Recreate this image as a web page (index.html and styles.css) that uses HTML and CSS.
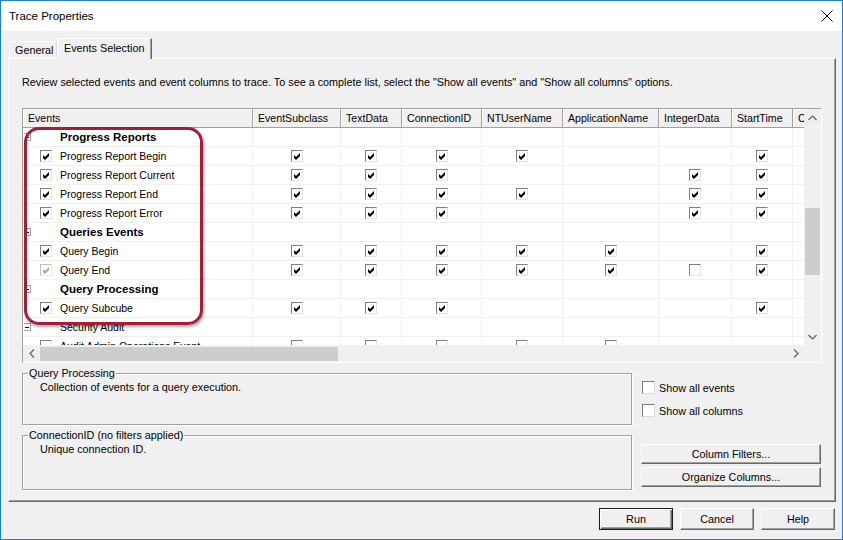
FILE: index.html
```html
<!DOCTYPE html>
<html>
<head>
<meta charset="utf-8">
<link rel="stylesheet" href="styles.css">
</head>
<body>
<div class="window">
  <div class="titlebar">
    <span class="title">Trace Properties</span>
    <svg class="close" width="12" height="12" viewBox="0 0 12 12"><path d="M0.5 0.5 L11.5 11.5 M11.5 0.5 L0.5 11.5" stroke="#000" stroke-width="1" fill="none"/></svg>
  </div>
  <div class="tabs">
    <div class="tab">General</div>
    <div class="tab active">Events Selection</div>
  </div>
  <div class="panel">
    <div class="intro">Review selected events and event columns to trace. To see a complete list, select the "Show all events" and "Show all columns" options.</div>
    <div class="gridwrap">
      <div class="gmain">
        <div class="viewport">
          <div class="row head">
            <div class="h">Events</div><div class="h">EventSubclass</div><div class="h">TextData</div><div class="h">ConnectionID</div><div class="h">NTUserName</div><div class="h">ApplicationName</div><div class="h">IntegerData</div><div class="h">StartTime</div><div class="h">CPUTime</div>
          </div>
          <div class="row">
            <div class="c ev cat"><i class="tree"></i><b>Progress Reports</b></div><div class="c"></div><div class="c"></div><div class="c"></div><div class="c"></div><div class="c"></div><div class="c"></div><div class="c"></div><div class="c"></div>
          </div>
          <div class="row">
            <div class="c ev"><i class="cb on"><svg viewBox="0 0 7 7"><polygon points="0,2 2,4 6,0 6,3 2,7 0,5"/></svg></i>Progress Report Begin</div>
            <div class="c"><i class="cb on"><svg viewBox="0 0 7 7"><polygon points="0,2 2,4 6,0 6,3 2,7 0,5"/></svg></i></div>
            <div class="c"><i class="cb on"><svg viewBox="0 0 7 7"><polygon points="0,2 2,4 6,0 6,3 2,7 0,5"/></svg></i></div>
            <div class="c"><i class="cb on"><svg viewBox="0 0 7 7"><polygon points="0,2 2,4 6,0 6,3 2,7 0,5"/></svg></i></div>
            <div class="c"><i class="cb on"><svg viewBox="0 0 7 7"><polygon points="0,2 2,4 6,0 6,3 2,7 0,5"/></svg></i></div>
            <div class="c"></div>
            <div class="c"></div>
            <div class="c"><i class="cb on"><svg viewBox="0 0 7 7"><polygon points="0,2 2,4 6,0 6,3 2,7 0,5"/></svg></i></div>
            <div class="c"></div>
          </div>
          <div class="row">
            <div class="c ev"><i class="cb on"><svg viewBox="0 0 7 7"><polygon points="0,2 2,4 6,0 6,3 2,7 0,5"/></svg></i>Progress Report Current</div>
            <div class="c"><i class="cb on"><svg viewBox="0 0 7 7"><polygon points="0,2 2,4 6,0 6,3 2,7 0,5"/></svg></i></div>
            <div class="c"><i class="cb on"><svg viewBox="0 0 7 7"><polygon points="0,2 2,4 6,0 6,3 2,7 0,5"/></svg></i></div>
            <div class="c"><i class="cb on"><svg viewBox="0 0 7 7"><polygon points="0,2 2,4 6,0 6,3 2,7 0,5"/></svg></i></div>
            <div class="c"></div>
            <div class="c"></div>
            <div class="c"><i class="cb on"><svg viewBox="0 0 7 7"><polygon points="0,2 2,4 6,0 6,3 2,7 0,5"/></svg></i></div>
            <div class="c"><i class="cb on"><svg viewBox="0 0 7 7"><polygon points="0,2 2,4 6,0 6,3 2,7 0,5"/></svg></i></div>
            <div class="c"></div>
          </div>
          <div class="row">
            <div class="c ev"><i class="cb on"><svg viewBox="0 0 7 7"><polygon points="0,2 2,4 6,0 6,3 2,7 0,5"/></svg></i>Progress Report End</div>
            <div class="c"><i class="cb on"><svg viewBox="0 0 7 7"><polygon points="0,2 2,4 6,0 6,3 2,7 0,5"/></svg></i></div>
            <div class="c"><i class="cb on"><svg viewBox="0 0 7 7"><polygon points="0,2 2,4 6,0 6,3 2,7 0,5"/></svg></i></div>
            <div class="c"><i class="cb on"><svg viewBox="0 0 7 7"><polygon points="0,2 2,4 6,0 6,3 2,7 0,5"/></svg></i></div>
            <div class="c"><i class="cb on"><svg viewBox="0 0 7 7"><polygon points="0,2 2,4 6,0 6,3 2,7 0,5"/></svg></i></div>
            <div class="c"></div>
            <div class="c"><i class="cb on"><svg viewBox="0 0 7 7"><polygon points="0,2 2,4 6,0 6,3 2,7 0,5"/></svg></i></div>
            <div class="c"><i class="cb on"><svg viewBox="0 0 7 7"><polygon points="0,2 2,4 6,0 6,3 2,7 0,5"/></svg></i></div>
            <div class="c"></div>
          </div>
          <div class="row">
            <div class="c ev"><i class="cb on"><svg viewBox="0 0 7 7"><polygon points="0,2 2,4 6,0 6,3 2,7 0,5"/></svg></i>Progress Report Error</div>
            <div class="c"><i class="cb on"><svg viewBox="0 0 7 7"><polygon points="0,2 2,4 6,0 6,3 2,7 0,5"/></svg></i></div>
            <div class="c"><i class="cb on"><svg viewBox="0 0 7 7"><polygon points="0,2 2,4 6,0 6,3 2,7 0,5"/></svg></i></div>
            <div class="c"><i class="cb on"><svg viewBox="0 0 7 7"><polygon points="0,2 2,4 6,0 6,3 2,7 0,5"/></svg></i></div>
            <div class="c"></div>
            <div class="c"></div>
            <div class="c"><i class="cb on"><svg viewBox="0 0 7 7"><polygon points="0,2 2,4 6,0 6,3 2,7 0,5"/></svg></i></div>
            <div class="c"><i class="cb on"><svg viewBox="0 0 7 7"><polygon points="0,2 2,4 6,0 6,3 2,7 0,5"/></svg></i></div>
            <div class="c"></div>
          </div>
          <div class="row">
            <div class="c ev cat"><i class="tree"></i><b>Queries Events</b></div><div class="c"></div><div class="c"></div><div class="c"></div><div class="c"></div><div class="c"></div><div class="c"></div><div class="c"></div><div class="c"></div>
          </div>
          <div class="row">
            <div class="c ev"><i class="cb on"><svg viewBox="0 0 7 7"><polygon points="0,2 2,4 6,0 6,3 2,7 0,5"/></svg></i>Query Begin</div>
            <div class="c"><i class="cb on"><svg viewBox="0 0 7 7"><polygon points="0,2 2,4 6,0 6,3 2,7 0,5"/></svg></i></div>
            <div class="c"><i class="cb on"><svg viewBox="0 0 7 7"><polygon points="0,2 2,4 6,0 6,3 2,7 0,5"/></svg></i></div>
            <div class="c"><i class="cb on"><svg viewBox="0 0 7 7"><polygon points="0,2 2,4 6,0 6,3 2,7 0,5"/></svg></i></div>
            <div class="c"><i class="cb on"><svg viewBox="0 0 7 7"><polygon points="0,2 2,4 6,0 6,3 2,7 0,5"/></svg></i></div>
            <div class="c"><i class="cb on"><svg viewBox="0 0 7 7"><polygon points="0,2 2,4 6,0 6,3 2,7 0,5"/></svg></i></div>
            <div class="c"></div>
            <div class="c"><i class="cb on"><svg viewBox="0 0 7 7"><polygon points="0,2 2,4 6,0 6,3 2,7 0,5"/></svg></i></div>
            <div class="c"></div>
          </div>
          <div class="row">
            <div class="c ev"><i class="cb on dim"><svg viewBox="0 0 7 7"><polygon points="0,2 2,4 6,0 6,3 2,7 0,5"/></svg></i>Query End</div>
            <div class="c"><i class="cb on"><svg viewBox="0 0 7 7"><polygon points="0,2 2,4 6,0 6,3 2,7 0,5"/></svg></i></div>
            <div class="c"><i class="cb on"><svg viewBox="0 0 7 7"><polygon points="0,2 2,4 6,0 6,3 2,7 0,5"/></svg></i></div>
            <div class="c"><i class="cb on"><svg viewBox="0 0 7 7"><polygon points="0,2 2,4 6,0 6,3 2,7 0,5"/></svg></i></div>
            <div class="c"><i class="cb on"><svg viewBox="0 0 7 7"><polygon points="0,2 2,4 6,0 6,3 2,7 0,5"/></svg></i></div>
            <div class="c"><i class="cb on"><svg viewBox="0 0 7 7"><polygon points="0,2 2,4 6,0 6,3 2,7 0,5"/></svg></i></div>
            <div class="c"><i class="cb"></i></div>
            <div class="c"><i class="cb on"><svg viewBox="0 0 7 7"><polygon points="0,2 2,4 6,0 6,3 2,7 0,5"/></svg></i></div>
            <div class="c"></div>
          </div>
          <div class="row">
            <div class="c ev cat"><i class="tree"></i><b>Query Processing</b></div><div class="c"></div><div class="c"></div><div class="c"></div><div class="c"></div><div class="c"></div><div class="c"></div><div class="c"></div><div class="c"></div>
          </div>
          <div class="row">
            <div class="c ev"><i class="cb on"><svg viewBox="0 0 7 7"><polygon points="0,2 2,4 6,0 6,3 2,7 0,5"/></svg></i>Query Subcube</div>
            <div class="c"><i class="cb on"><svg viewBox="0 0 7 7"><polygon points="0,2 2,4 6,0 6,3 2,7 0,5"/></svg></i></div>
            <div class="c"><i class="cb on"><svg viewBox="0 0 7 7"><polygon points="0,2 2,4 6,0 6,3 2,7 0,5"/></svg></i></div>
            <div class="c"><i class="cb on"><svg viewBox="0 0 7 7"><polygon points="0,2 2,4 6,0 6,3 2,7 0,5"/></svg></i></div>
            <div class="c"></div>
            <div class="c"></div>
            <div class="c"></div>
            <div class="c"><i class="cb on"><svg viewBox="0 0 7 7"><polygon points="0,2 2,4 6,0 6,3 2,7 0,5"/></svg></i></div>
            <div class="c"></div>
          </div>
          <div class="row">
            <div class="c ev cat"><i class="tree"></i><span>Security Audit</span></div><div class="c"></div><div class="c"></div><div class="c"></div><div class="c"></div><div class="c"></div><div class="c"></div><div class="c"></div><div class="c"></div>
          </div>
          <div class="row">
            <div class="c ev"><i class="cb"></i>Audit Admin Operations Event</div>
            <div class="c"><i class="cb"></i></div>
            <div class="c"><i class="cb"></i></div>
            <div class="c"><i class="cb"></i></div>
            <div class="c"><i class="cb"></i></div>
            <div class="c"><i class="cb"></i></div>
            <div class="c"></div>
            <div class="c"></div>
            <div class="c"></div>
          </div>
        </div>
        <div class="vscroll">
          <svg class="arr" width="9" height="6" viewBox="0 0 9 6"><path d="M0.5 5 L4.5 1 L8.5 5" stroke="#606060" stroke-width="1.2" fill="none"/></svg>
          <div class="vtrack"><div class="vthumb"></div></div>
          <svg class="arr" width="9" height="6" viewBox="0 0 9 6"><path d="M0.5 1 L4.5 5 L8.5 1" stroke="#606060" stroke-width="1.2" fill="none"/></svg>
        </div>
      </div>
      <div class="hbar">
        <div class="hscroll">
          <svg class="harr" width="6" height="9" viewBox="0 0 6 9"><path d="M5 0.5 L1 4.5 L5 8.5" stroke="#606060" stroke-width="1.2" fill="none"/></svg>
          <div class="htrack"><div class="hthumb"></div></div>
          <svg class="harr" width="6" height="9" viewBox="0 0 6 9"><path d="M1 0.5 L5 4.5 L1 8.5" stroke="#606060" stroke-width="1.2" fill="none"/></svg>
        </div>
        <div class="corner"></div>
      </div>
      <div class="oval"></div>
    </div>
    <div class="lower">
      <div class="groups">
        <div class="group g1">
          <div class="gtitle">Query Processing</div>
          <div class="gtext">Collection of events for a query execution.</div>
        </div>
        <div class="group g2">
          <div class="gtitle">ConnectionID (no filters applied)</div>
          <div class="gtext">Unique connection ID.</div>
        </div>
      </div>
      <div class="side">
        <div class="opt first"><i class="box"></i>Show all events</div>
        <div class="opt"><i class="box"></i>Show all columns</div>
        <div class="btn wide b1">Column Filters...</div>
        <div class="btn wide b2">Organize Columns...</div>
      </div>
    </div>
  </div>
  <div class="footer">
    <div class="btn def">Run</div>
    <div class="btn">Cancel</div>
    <div class="btn">Help</div>
  </div>
</div>
</body>
</html>
```
FILE: styles.css
```css
body {
  margin: 0;
  background: #fff;
  font-family: "Liberation Sans", Arial, sans-serif;
  font-size: 10.8px;
  color: #000;
}
.window {
  width: 843px;
  height: 540px;
  box-sizing: border-box;
  border: 1px solid #1b7fd6;
  background: #f0f0f0;
  display: flex;
  flex-direction: column;
}
.titlebar {
  flex: none;
  height: 30px;
  background: #fff;
  display: flex;
  align-items: center;
  justify-content: space-between;
  padding: 0 9px 0 8px;
  font-size: 11.5px;
}
.title { line-height: 30px; }
.tabs {
  flex: none;
  display: flex;
  align-items: flex-end;
  height: 20px;
  margin-top: 7px;
  padding-left: 8px;
  position: relative;
  z-index: 1;
}
.tab {
  box-sizing: border-box;
  height: 17px;
  width: 48px;
  padding-left: 5px;
  line-height: 16px;
  border: 1px solid #d9d9d9;
  border-bottom: none;
  border-top-color: #fff;
  border-left-color: #fff;
  background: #f0f0f0;
}
.tab.active {
  width: 95px;
  height: 21px;
  margin-bottom: -1px;
  padding-left: 6px;
  line-height: 18px;
  border-right: 1px solid #696969;
  box-shadow: inset -1px 0 #a0a0a0;
}
.panel {
  flex: none;
  margin-left: 7px;
  width: 828px;
  height: 444px;
  box-sizing: border-box;
  border-top: 1px solid #fff;
  border-left: 1px solid #fff;
  border-right: 1px solid #696969;
  border-bottom: 1px solid #696969;
  box-shadow: inset -1px -1px #a0a0a0;
  padding: 17px 0 0 13px;
}
.intro { line-height: 13px; height: 13px; white-space: nowrap; font-size: 10.8px; }
.gridwrap {
  position: relative;
  margin-top: 19px;
  width: 800px;
  height: 255px;
  box-sizing: border-box;
  border-top: 1px solid #a0a0a0;
  border-left: 1px solid #a0a0a0;
  border-right: 1px solid #fff;
  border-bottom: 1px solid #fff;
}
.gmain { display: flex; height: 236px; }
.viewport {
  width: 781px;
  height: 236px;
  overflow: hidden;
  background: #fff;
}
.row {
  display: grid;
  grid-template-columns: 230px 88px 61px 80px 81px 96px 73px 61px 60px;
  height: 19px;
}
.h {
  box-sizing: border-box;
  height: 19px;
  background: #f0f0f0;
  border-right: 1px solid #a0a0a0;
  border-bottom: 1px solid #a0a0a0;
  box-shadow: inset 1px 1px #fff;
  padding-left: 5px;
  line-height: 18px;
  white-space: nowrap;
  overflow: hidden;
  font-size: 10.6px;
}
.c {
  box-sizing: border-box;
  height: 19px;
  border-right: 1px solid #f0f0f0;
  border-bottom: 1px solid #f0f0f0;
  display: flex;
  align-items: center;
  justify-content: center;
  white-space: nowrap;
  font-size: 10.5px;
}
.c.ev { justify-content: flex-start; padding-left: 17px; }
.c.ev .cb { margin-right: 8px; }
.c.cat { padding-left: 1px; }
.c.cat b, .c.cat span { margin-left: 29px; }
.c.cat b { font-size: 11.5px; }
.tree {
  display: block;
  width: 7px;
  height: 8px;
  box-sizing: border-box;
  border: 1px solid #a0a0a0;
  border-left: none;
  position: relative;
}
.tree::after {
  content: "";
  position: absolute;
  left: 1px;
  top: 3px;
  width: 4px;
  height: 1px;
  background: #000;
}
.cb {
  display: block;
  width: 12px;
  height: 12px;
  box-sizing: border-box;
  border-top: 1px solid #808080;
  border-left: 1px solid #808080;
  border-right: 1px solid #e3e3e3;
  border-bottom: 1px solid #e3e3e3;
  background: #fff;
  position: relative;
}
.cb svg {
  position: absolute;
  left: 2px;
  top: 2px;
  width: 7px;
  height: 7px;
  fill: #000;
}
.cb.dim { border-color: #c0c0c0 #e8e8e8 #e8e8e8 #c0c0c0; }
.cb.dim svg { fill: #a8a8a8; }
.vscroll {
  width: 17px;
  height: 236px;
  background: #f0f0f0;
  display: flex;
  flex-direction: column;
  align-items: center;
}
.vscroll .arr { flex: none; margin: 6px 0 5px; }
.vtrack { flex: 1; width: 100%; position: relative; }
.vthumb {
  position: absolute;
  left: 1px;
  right: 1px;
  top: 82px;
  height: 67px;
  background: #cdcdcd;
}
.hbar { display: flex; height: 17px; }
.hscroll {
  width: 781px;
  height: 17px;
  background: #f0f0f0;
  display: flex;
  align-items: center;
}
.harr { flex: none; margin: 0 5px 0 6px; }
.htrack { flex: 1; height: 100%; position: relative; }
.hthumb {
  position: absolute;
  left: 0;
  width: 298px;
  top: 2px;
  bottom: 1px;
  background: #cdcdcd;
}
.corner { width: 17px; height: 17px; background: #f0f0f0; }
.oval {
  position: absolute;
  left: 1px;
  top: 18px;
  width: 179px;
  height: 198px;
  box-sizing: border-box;
  border: 3px solid #a51e38;
  border-radius: 15px;
  box-shadow: 1px 2px 3px rgba(0, 0, 0, 0.35);
}
.lower { display: flex; margin-top: 4px; }
.groups { width: 610px; }
.group {
  box-sizing: border-box;
  border: 1px solid #a0a0a0;
  box-shadow: inset 1px 1px #fff, 1px 1px #fff;
  margin-top: 6px;
}
.g1 { height: 52px; }
.g2 { height: 55px; margin-top: 10px; }
.gtitle {
  display: table;
  margin: -7px 0 0 5px;
  padding: 0 1px;
  background: #f0f0f0;
  line-height: 13px;
}
.gtext { margin-top: 1px; padding-left: 17px; line-height: 13px; }
.side { margin-left: 9px; width: 180px; }
.opt { display: flex; align-items: center; height: 13px; margin-top: 10px; padding-left: 1px; }
.opt.first { margin-top: 14px; }
.box {
  display: block;
  width: 13px;
  height: 13px;
  box-sizing: border-box;
  border-top: 1px solid #7a7a7a;
  border-left: 1px solid #7a7a7a;
  border-right: 1px solid #dcdcdc;
  border-bottom: 1px solid #dcdcdc;
  background: #fff;
  margin-right: 4px;
}
.btn {
  box-sizing: border-box;
  width: 74px;
  height: 22px;
  display: flex;
  align-items: center;
  justify-content: center;
  background: #f0f0f0;
  border-top: 1px solid #fff;
  border-left: 1px solid #fff;
  border-right: 1px solid #696969;
  border-bottom: 1px solid #696969;
  box-shadow: inset -1px -1px #a0a0a0;
}
.btn.wide { width: 180px; height: 20px; }
.b1 { margin-top: 27px; }
.b2 { margin-top: 3px; }
.footer {
  display: flex;
  justify-content: flex-end;
  gap: 7px;
  margin-top: 6px;
  padding-right: 7px;
}
.btn.def {
  border: 1px solid #1a1a1a;
  box-shadow: inset 1px 1px #fff, inset -1px -1px #696969, inset -2px -2px #a0a0a0;
}
```
